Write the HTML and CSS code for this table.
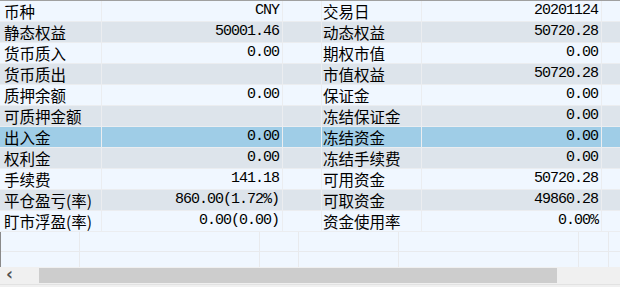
FILE: index.html
```html
<!DOCTYPE html>
<html>
<head>
<meta charset="utf-8">
<link rel="stylesheet" href="styles.css">
</head>
<body>
<div class="panel">
  <div class="rows">
    <div class="row light"><div class="c lab">币种</div><div class="c val">CNY</div><div class="c gap"></div><div class="c lab2">交易日</div><div class="c val">20201124</div><div class="c end"></div></div>
    <div class="row dark"><div class="c lab">静态权益</div><div class="c val">50001.46</div><div class="c gap"></div><div class="c lab2">动态权益</div><div class="c val">50720.28</div><div class="c end"></div></div>
    <div class="row light"><div class="c lab">货币质入</div><div class="c val">0.00</div><div class="c gap"></div><div class="c lab2">期权市值</div><div class="c val">0.00</div><div class="c end"></div></div>
    <div class="row dark"><div class="c lab">货币质出</div><div class="c val"></div><div class="c gap"></div><div class="c lab2">市值权益</div><div class="c val">50720.28</div><div class="c end"></div></div>
    <div class="row light"><div class="c lab">质押余额</div><div class="c val">0.00</div><div class="c gap"></div><div class="c lab2">保证金</div><div class="c val">0.00</div><div class="c end"></div></div>
    <div class="row dark"><div class="c lab">可质押金额</div><div class="c val"></div><div class="c gap"></div><div class="c lab2">冻结保证金</div><div class="c val">0.00</div><div class="c end"></div></div>
    <div class="row sel"><div class="c lab">出入金</div><div class="c val">0.00</div><div class="c gap"></div><div class="c lab2">冻结资金</div><div class="c val">0.00</div><div class="c end"></div></div>
    <div class="row dark"><div class="c lab">权利金</div><div class="c val">0.00</div><div class="c gap"></div><div class="c lab2">冻结手续费</div><div class="c val">0.00</div><div class="c end"></div></div>
    <div class="row light"><div class="c lab">手续费</div><div class="c val">141.18</div><div class="c gap"></div><div class="c lab2">可用资金</div><div class="c val">50720.28</div><div class="c end"></div></div>
    <div class="row dark"><div class="c lab">平仓盈亏(率)</div><div class="c val">860.00(1.72%)</div><div class="c gap"></div><div class="c lab2">可取资金</div><div class="c val">49860.28</div><div class="c end"></div></div>
    <div class="row light"><div class="c lab">盯市浮盈(率)</div><div class="c val">0.00(0.00)</div><div class="c gap"></div><div class="c lab2">资金使用率</div><div class="c val">0.00%</div><div class="c end"></div></div>
  </div>
  <div class="back">
    <div class="brow"><div class="b b1"></div><div class="b b2"></div><div class="b b3"></div><div class="b b4"></div><div class="b b5"></div><div class="b b6"></div><div class="b b7"></div></div>
    <div class="brow"><div class="b b1"></div><div class="b b2"></div><div class="b b3"></div><div class="b b4"></div><div class="b b5"></div><div class="b b6"></div><div class="b b7"></div></div>
  </div>
  <div class="hscroll">
    <div class="arrow">&#x2039;</div>
    <div class="thumb"></div>
    <div class="track"></div>
  </div>
  <div class="foot"></div>
</div>
</body>
</html>
```

FILE: styles.css
```css
* { box-sizing: border-box; }
html, body { margin: 0; padding: 0; background: #f0f7ff; }
.panel {
  width: 620px;
  height: 287px;
  overflow: hidden;
  border-top: 1px solid #a0a0a0;
  background: #f0f7ff;
  display: flex;
  flex-direction: column;
}
.rows { display: flex; flex-direction: column; }
.row {
  display: grid;
  grid-template-columns: 102px 181px 39px 100px 180px 1fr;
  height: 21px;
}
.row.light { background: #f0f7ff; }
.row.dark { background: #dde4eb; }
.row.sel { background: #9fcde7; }
.c {
  border-right: 1px solid #ebedf0;
  border-bottom: 1px solid #ebedf0;
  height: 21px;
  line-height: 20px;
  color: #000;
  white-space: nowrap;
}
.lab {
  font-family: "Noto Sans CJK SC", sans-serif;
  font-size: 15.5px;
  padding-left: 4px;
}
.lab2 {
  font-family: "Noto Sans CJK SC", sans-serif;
  font-size: 15.5px;
  padding-left: 1px;
}
.val {
  font-family: "Liberation Mono", monospace;
  font-size: 15px;
  letter-spacing: -1px;
  text-align: right;
  padding-right: 3px;
}
.end { border-right: none; }
.back {
  border-left: 1px solid #8a8a8a;
  display: flex;
  flex-direction: column;
}
.brow {
  display: grid;
  grid-template-columns: 79px 180px 39px 100px 180px 30px 1fr;
  height: 20px;
  flex: none;
}
.brow + .brow { height: 15px; }
.b {
  border-right: 1px solid #e8eaed;
  border-bottom: 1px solid #e8eaed;
}
.brow + .brow .b { border-bottom: none; }
.b7 { border-right: none; }
.hscroll {
  height: 17px;
  background: #f0f0f0;
  display: flex;
  align-items: stretch;
  flex: none;
}
.arrow {
  width: 39px;
  font-family: "DejaVu Sans", sans-serif;
  font-size: 17px;
  font-weight: bold;
  color: #505050;
  line-height: 15px;
  padding-left: 6px;
}
.thumb {
  width: 518px;
  background: #cdcdcd;
  margin: 1px 0;
}
.track { flex: 1; }
.foot {
  flex: 1;
  background: #f0f0f0;
  border-top: 1px solid #e2e2e2;
}
```
